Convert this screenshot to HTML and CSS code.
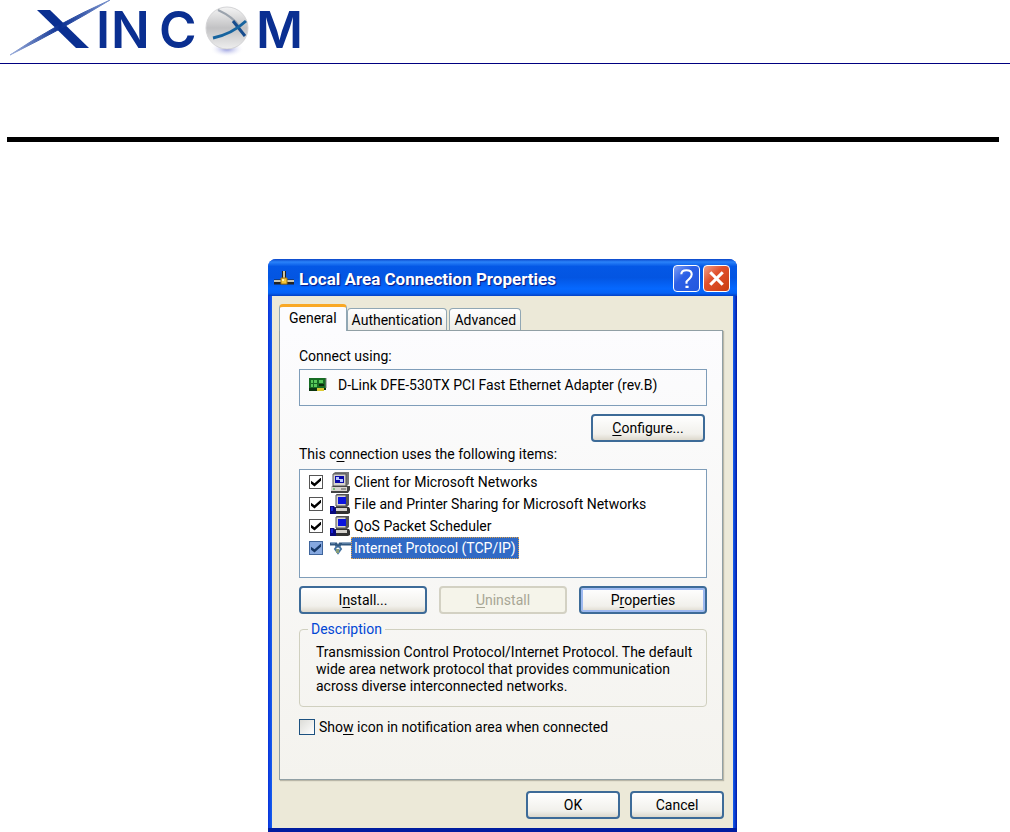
FILE: index.html
```html
<!DOCTYPE html>
<html lang="en">
<head>
  <meta charset="UTF-8">
  <meta name="viewport" content="width=device-width, initial-scale=1.0">
  <title>Local Area Connection Properties</title>
  <link rel="stylesheet" href="styles.css">
</head>
<body>
  <header class="page-header">
    <svg class="logo" viewBox="0 0 320 60" role="img" aria-label="Xincom">
      <defs>
        <linearGradient id="globe" x2="0" y2="1">
          <stop offset="0" stop-color="#f4f4f4"/>
          <stop offset="0.5" stop-color="#c2c2c4"/>
          <stop offset="1" stop-color="#eeeeee"/>
        </linearGradient>
        <radialGradient id="glow">
          <stop offset="0" stop-color="#8c92dc"/>
          <stop offset="1" stop-color="#ffffff" stop-opacity="0"/>
        </radialGradient>
        <linearGradient id="swoosh">
          <stop offset="0" stop-color="#9db0dc"/>
          <stop offset="0.5" stop-color="#0a2f91"/>
          <stop offset="1" stop-color="#7f97cf"/>
        </linearGradient>
      </defs>
      <path d="M37 10h13L89 48H76z" fill="#0a2f91"/>
      <path d="M10 55Q54 25 110 0Q66 27 10 55z" fill="url(#swoosh)" stroke="url(#swoosh)"/>
      <g class="logo-text">
        <text x="96" y="48">I</text>
        <text x="111" y="48">N</text>
        <text x="159" y="48">C</text>
        <text x="256" y="48">M</text>
      </g>
      <ellipse cx="227" cy="49" rx="17" ry="8" fill="url(#glow)"/>
      <circle cx="227" cy="28" r="21" fill="url(#globe)" stroke="#d4d4d6"/>
      <path d="M218 10Q233 17 239 26" fill="none" stroke="#9ba3ad" stroke-width="2"/>
      <path d="M233 21l12 15" stroke="#164c8e" stroke-width="3"/>
      <path d="M213 38Q232 34 246 21" fill="none" stroke="#17649f" stroke-width="3"/>
    </svg>
  </header>
  <hr class="rule">

  <main>
    <section class="dialog" aria-labelledby="dialog-title">
      <div class="titlebar">
        <svg class="title-icon" viewBox="0 0 20 18" aria-hidden="true">
          <path d="M10 1v10" stroke="#222" stroke-width="4"/>
          <path d="M10 1v10" stroke="#c9c6a8" stroke-width="2"/>
          <path d="M0 12h20" stroke="#222" stroke-width="5"/>
          <path d="M0 11h20" stroke="#c9c6b4" stroke-width="2"/>
          <path d="M7 8h6v6H7z" fill="#f3c63a" stroke="#a07413"/>
          <path d="M8 9h2v2H8z" fill="#fff3a8"/>
        </svg>
        <h1 id="dialog-title">Local Area Connection Properties</h1>
        <button class="title-button help" aria-label="Help">
          <svg viewBox="0 0 24 24"><path d="M7 8Q7 4 12 4t5 4q0 2-2 4l-3 3v2" fill="none" stroke="#fff" stroke-width="2"/><path d="M11 19h3v2h-3z" fill="#fff"/></svg>
        </button>
        <button class="title-button close" aria-label="Close">
          <svg viewBox="0 0 24 24"><path d="M6 6l12 12M18 6L6 18" stroke="#fff" stroke-width="3"/></svg>
        </button>
      </div>

      <div class="dialog-body">
        <div class="tabs" role="tablist">
          <button class="tab active" role="tab" aria-selected="true">General</button>
          <button class="tab" role="tab" aria-selected="false">Authentication</button>
          <button class="tab" role="tab" aria-selected="false">Advanced</button>
        </div>

        <div class="panel">
          <p class="label">Connect using:</p>
          <div class="adapter">
            <svg class="adapter-icon" viewBox="0 0 20 15" aria-hidden="true">
              <path d="M1 1h17v10H1z" fill="#176c24"/>
              <path d="M1 11h17v2H9v1H1z" fill="#0b3411"/>
              <path d="M3 3h2v3H3zM6 3h3v3H6zM3 7h2v3H3zM6 7h3v3H6zM11 3h4v3h-4z" fill="#58c95a"/>
              <path d="M11 7h5v2h-5z" fill="#0a2c0d"/>
              <path d="M9 11h7v3H9z" fill="#d9c832"/>
              <path d="M18 1v10" stroke="#777"/>
            </svg>
            <span>D-Link DFE-530TX PCI Fast Ethernet Adapter (rev.B)</span>
          </div>
          <div class="configure-row">
            <button class="button configure"><u>C</u>onfigure...</button>
          </div>

          <p class="label items-label">This c<u>o</u>nnection uses the following items:</p>
          <ul class="items">
            <li>
              <input type="checkbox" id="client" checked>
              <svg class="item-icon" viewBox="0 0 21 21" aria-hidden="true">
                <path d="M3 2l2-2h14v12l-2 2H3z" fill="#777"/>
                <path d="M3 2h13v12H3z" fill="#d6d3ce" stroke="#555"/>
                <path d="M5 4h9v7H5z" fill="#0808a8"/>
                <path d="M6 5h3v2h4v3h-3V8H6z" fill="#b9c8ff"/>
                <path d="M1 15l2-1h17v4l-2 3H1z" fill="#444"/>
                <path d="M1 15h16v4H1z" fill="#d6d3ce"/>
                <path d="M3 17h2" stroke="#1fa51f"/>
                <path d="M11 17h5" stroke="#555"/>
              </svg>
              <label for="client">Client for Microsoft Networks</label>
            </li>
            <li>
              <input type="checkbox" id="sharing" checked>
              <svg class="item-icon" viewBox="0 0 21 21" aria-hidden="true">
                <path d="M6 1l1-1h12v11l-2 2H6z" fill="#555"/>
                <path d="M6 1h10v11H6z" fill="#d6d3ce" stroke="#555"/>
                <path d="M8 3h8v7H8z" fill="#0b14dc"/>
                <path d="M5 13h14l1 2v4l-2 1H5z" fill="#333"/>
                <path d="M6 14h11v3H6z" fill="#d6d3ce"/>
                <path d="M0 12h4l2 3v5H0z" fill="#08087c"/>
                <path d="M1 13h2v4H1z" fill="#1a24d8"/>
              </svg>
              <label for="sharing">File and Printer Sharing for Microsoft Networks</label>
            </li>
            <li>
              <input type="checkbox" id="qos" checked>
              <svg class="item-icon" viewBox="0 0 21 21" aria-hidden="true">
                <path d="M6 1l1-1h12v11l-2 2H6z" fill="#555"/>
                <path d="M6 1h10v11H6z" fill="#d6d3ce" stroke="#555"/>
                <path d="M8 3h8v7H8z" fill="#0b14dc"/>
                <path d="M5 13h14l1 2v4l-2 1H5z" fill="#333"/>
                <path d="M6 14h11v3H6z" fill="#d6d3ce"/>
                <path d="M0 12h4l2 3v5H0z" fill="#08087c"/>
                <path d="M1 13h2v4H1z" fill="#1a24d8"/>
              </svg>
              <label for="qos">QoS Packet Scheduler</label>
            </li>
            <li class="selected">
              <input type="checkbox" id="tcpip" checked>
              <svg class="item-icon" viewBox="0 0 21 21" aria-hidden="true">
                <path d="M0 6h6l1 2h2l1-2h11" fill="none" stroke="#31577f" stroke-width="3"/>
                <path d="M1 5h4M12 5h9" stroke="#86a6c8"/>
                <path d="M7 8l-2 3 3 4 3-4-2-3" fill="none" stroke="#4775a3" stroke-width="2"/>
                <path d="M6 11h3v4H6z" fill="#899e78"/>
              </svg>
              <label for="tcpip">Internet Protocol (TCP/IP)</label>
            </li>
          </ul>

          <div class="actions">
            <button class="button">I<u>n</u>stall...</button>
            <button class="button" disabled><u>U</u>ninstall</button>
            <button class="button default">P<u>r</u>operties</button>
          </div>

          <fieldset>
            <legend>Description</legend>
            <p>Transmission Control Protocol/Internet Protocol. The default<br>wide area network protocol that provides communication<br>across diverse interconnected networks.</p>
          </fieldset>

          <div class="notify">
            <input type="checkbox" id="notify">
            <label for="notify">Sho<u>w</u> icon in notification area when connected</label>
          </div>
        </div>

        <div class="footer">
          <button class="button">OK</button>
          <button class="button">Cancel</button>
        </div>
      </div>
    </section>
  </main>
</body>
</html>
```
FILE: styles.css
```css
* {
  box-sizing: border-box;
}

body {
  margin: 0;
  background: #fff;
  color: #000;
  font-family: Roboto, "Liberation Sans", sans-serif;
  font-size: 14px;
  line-height: 18px;
}

p, h1, ul, fieldset {
  margin: 0;
  padding: 0;
}

button, input {
  margin: 0;
  font: inherit;
}

u {
  text-underline-offset: 2px;
}

/* Page header */
.page-header {
  height: 64px;
  border-bottom: 1px solid #000080;
}

.logo {
  display: block;
  width: 320px;
  height: 60px;
}

.logo-text {
  fill: #0a2f91;
  font-family: Inter, sans-serif;
  font-size: 51px;
  line-height: 1;
  font-weight: 600;
}

.rule {
  height: 5px;
  margin: 73px 11px 117px 7px;
  border: 0;
  background: #000;
}

main {
  display: flex;
  justify-content: center;
  padding-right: 5px;
}

/* Dialog window */
.dialog {
  width: 469px;
  border-radius: 8px 8px 0 0;
  background: linear-gradient(90deg, #0831d9, #1660f0 4px, #1660f0 465px, #0019a8);
  overflow: hidden;
}

.titlebar {
  display: flex;
  align-items: center;
  gap: 3px;
  height: 37px;
  padding: 2px 7px 0 6px;
  background: linear-gradient(#0a45c8, #2a83fa 8%, #0458e6 20%, #0355e2 50%, #0568ff 80%, #0562f5 92%, #0340c4);
}

.title-icon {
  width: 20px;
  height: 18px;
  margin-right: 2px;
}

.titlebar h1 {
  flex: 1;
  color: #fff;
  font-size: 17px;
  font-weight: bold;
  text-shadow: 1px 1px 1px #0a1883;
  white-space: nowrap;
}

.title-button {
  width: 27px;
  height: 27px;
  padding: 0;
  border: 1px solid #fff;
  border-radius: 4px;
}

.title-button svg {
  display: block;
  width: 100%;
}

.help {
  background: linear-gradient(135deg, #7f9ff5, #2c60e6 40%, #2257de);
}

.close {
  background: linear-gradient(135deg, #f0a08a, #e0512d 40%, #c93d10);
}

.dialog-body {
  margin: 0 4px;
  padding: 8px 9px 9px 7px;
  border-bottom: 0;
  background: #ece9d8;
}

.dialog {
  border-bottom: 4px solid #001da0;
}

/* Tabs */
.tabs {
  display: flex;
  align-items: flex-end;
  height: 26px;
}

.tab {
  height: 22px;
  margin-right: 2px;
  padding: 0 4px;
  border: 1px solid #91a7b4;
  border-bottom: 0;
  border-radius: 4px 4px 0 0;
  background: linear-gradient(#fff, #ecebe6);
}

.tab.active {
  position: relative;
  height: 27px;
  margin: 0 0 -1px;
  padding: 0 9px 3px;
  border-top: 3px solid #f9a825;
  background: #fcfcfe;
}

.panel {
  margin-right: 1px;
  padding: 16px 15px 43px 19px;
  border: 1px solid #91a0a5;
  background: linear-gradient(#fcfcfe, #f4f3ee);
  box-shadow: 1px 1px 1px #b9b7a8;
}

.adapter {
  display: flex;
  align-items: center;
  gap: 10px;
  height: 37px;
  margin-top: 4px;
  padding: 0 8px 6px;
  border: 1px solid #7f9db9;
}

.adapter-icon {
  width: 20px;
  height: 15px;
}

/* Buttons */
.button {
  height: 28px;
  padding: 0;
  border: 2px solid #3d6b98;
  border-radius: 4px;
  background: linear-gradient(#fff, #f1f0eb 75%, #dcd8cc);
}

.button:disabled {
  border-color: #d3d1c3;
  background: #f5f4ea;
  color: #a8a695;
}

.button.default {
  box-shadow: inset 0 0 0 2px #9db9f0;
}

.configure-row {
  display: flex;
  justify-content: flex-end;
  margin-top: 8px;
  padding-right: 2px;
}

.configure {
  width: 114px;
}

.items-label {
  margin-top: 3px;
}

/* Connection items */
.items {
  height: 109px;
  margin-top: 6px;
  padding: 1px 9px;
  border: 1px solid #7f9db9;
  background: #fff;
  list-style: none;
}

.items li {
  display: flex;
  align-items: center;
  height: 22px;
}

.items label {
  padding: 2px 3px;
}

.item-icon {
  width: 21px;
  height: 21px;
  margin-left: 7px;
}

input[type="checkbox"] {
  display: grid;
  place-items: center;
  width: 14px;
  height: 14px;
  border: 1px solid #555;
  background: #fff;
  appearance: none;
}

input[type="checkbox"]:checked::before {
  content: "";
  width: 10px;
  height: 9px;
  background: #000;
  clip-path: polygon(0 35%, 35% 65%, 100% 0, 100% 35%, 35% 100%, 0 70%);
}

.selected input[type="checkbox"] {
  border-color: #3f659c;
  background: #86a8df;
}

.selected input[type="checkbox"]:checked::before {
  background: #173968;
}

.selected label {
  background: #316ac5;
  color: #fff;
  outline: 1px dotted #d9a04a;
  outline-offset: -1px;
}

.actions {
  display: grid;
  grid-template-columns: repeat(3, 1fr);
  gap: 12px;
  margin-top: 8px;
}

fieldset {
  margin-top: 6px;
  padding: 6px 4px 11px 16px;
  border: 1px solid #d0d0bf;
  border-radius: 4px;
}

fieldset p {
  line-height: 17px;
}

legend {
  margin-left: -8px;
  padding: 0 3px;
  color: #0046d5;
}

.notify {
  display: flex;
  align-items: center;
  gap: 4px;
  margin-top: 11px;
}

.notify input[type="checkbox"] {
  width: 16px;
  height: 16px;
  border: 1px solid #1c5180;
  background: linear-gradient(135deg, #dcdcd7, #fff);
}

.footer {
  display: flex;
  justify-content: flex-end;
  gap: 10px;
  margin-top: 11px;
}

.footer .button {
  width: 94px;
}
```
